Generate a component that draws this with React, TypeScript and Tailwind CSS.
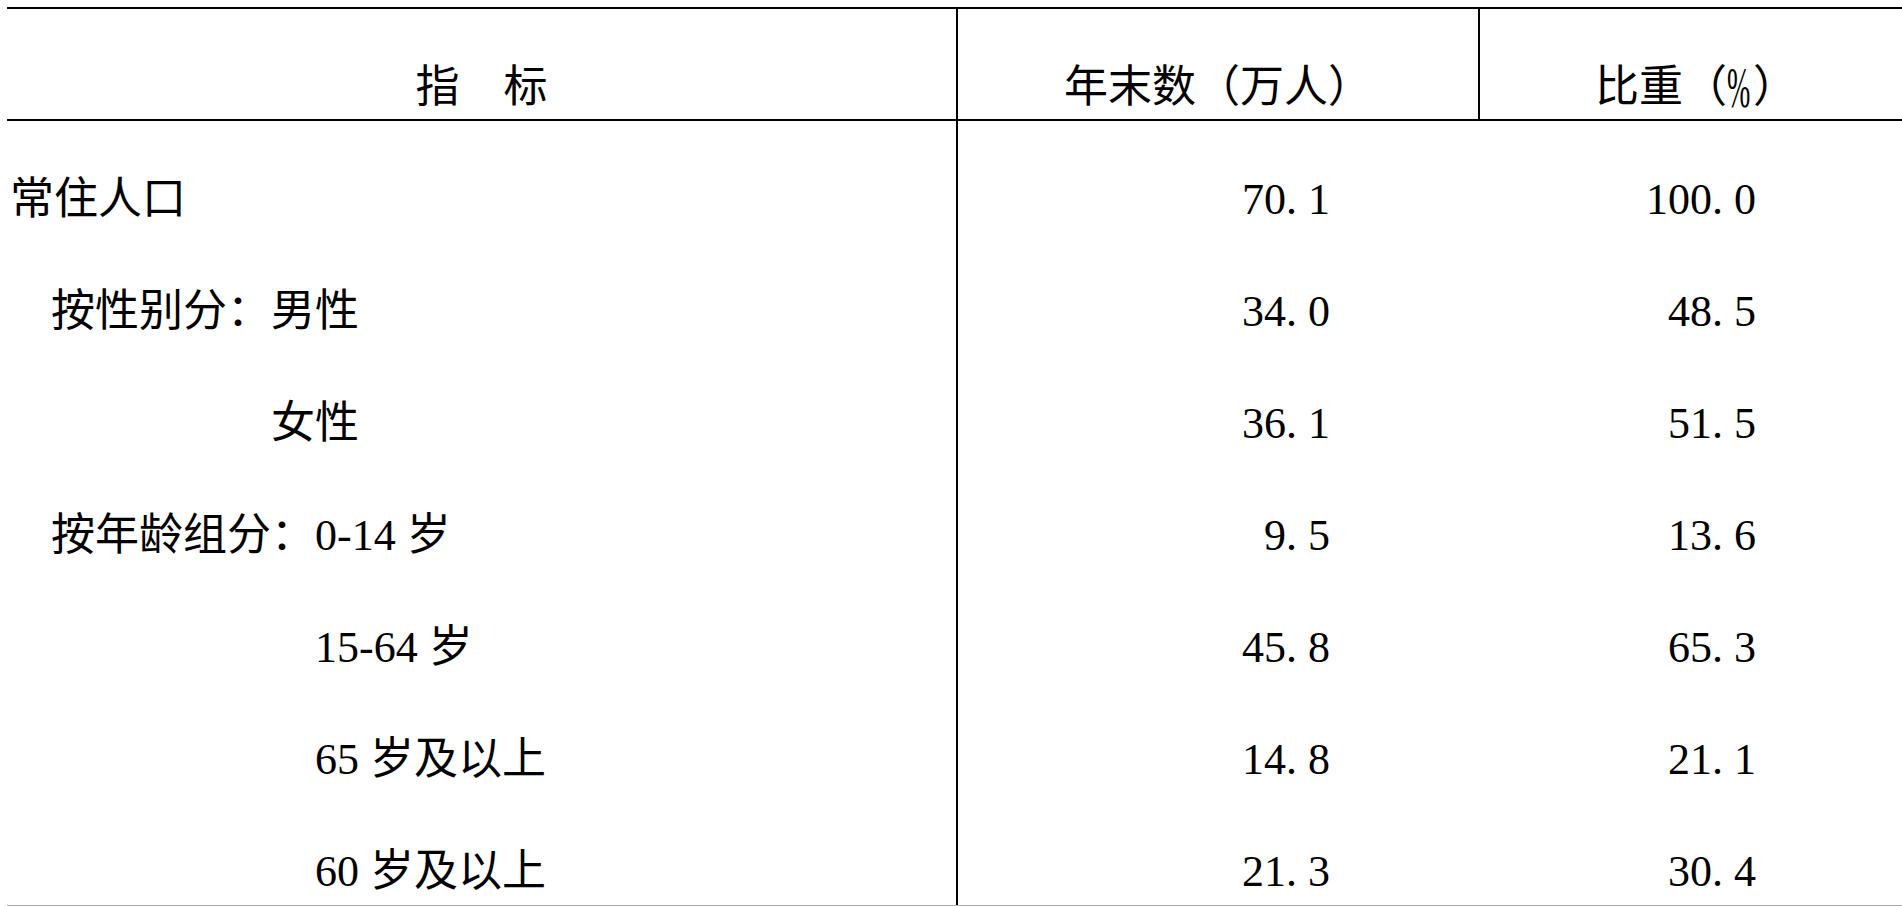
const font = "font-['Liberation_Serif','Noto_Sans_CJK_SC',serif]";

type Row = { label: string; indent: string; count: string; share: string; first?: boolean };

const rows: Row[] = [
  { label: "常住人口", indent: "pl-[3px]", count: "70.1", share: "100.0", first: true },
  { label: "按性别分：男性", indent: "pl-[44px]", count: "34.0", share: "48.5" },
  { label: "女性", indent: "pl-[264px]", count: "36.1", share: "51.5" },
  { label: "按年龄组分：0-14 岁", indent: "pl-[44px]", count: "9.5", share: "13.6" },
  { label: "15-64 岁", indent: "pl-[308px]", count: "45.8", share: "65.3" },
  { label: "65 岁及以上", indent: "pl-[308px]", count: "14.8", share: "21.1" },
  { label: "60 岁及以上", indent: "pl-[308px]", count: "21.3", share: "30.4" },
];

// period takes a half-width cell, like the source document's digits
const Num = ({ value }: { value: string }) => {
  const [whole, frac] = value.split(".");
  return (
    <span className="whitespace-nowrap">
      {whole}
      <span className="inline-block w-[22px]">.</span>
      {frac}
    </span>
  );
};

export default function App() {
  return (
    <div className={`h-[906px] overflow-hidden bg-white pl-[7px] text-black text-[44px] leading-none ${font} flex flex-col`}>
      {/* header */}
      <div className="mt-[7px] h-[114px] shrink-0 flex border-t-2 border-b-2 border-black">
        <div className="w-[951px] shrink-0 border-r-2 border-black flex items-center justify-center pt-[48px]">
          指　标
        </div>
        <div className="w-[522px] shrink-0 border-r-2 border-black flex items-center justify-center pt-[48px]">
          年末数（万人）
        </div>
        <div className="flex-1 flex items-center justify-center pt-[48px] pl-[10px]">
          <span className="whitespace-nowrap">
            比重（<span className="inline-block h-[44px] w-[26px] origin-left scale-x-[0.5] text-[56px] leading-[44px] align-top">%</span>）
          </span>
        </div>
      </div>

      {/* body */}
      <div className="flex-1 overflow-hidden border-b border-[#aaaaaa]">
        {rows.map((r) => {
          const h = r.first ? "h-[135px] pt-[23px]" : "h-[112px]";
          return (
            <div key={r.label} className="flex">
              <div className={`w-[951px] shrink-0 border-r-2 border-black flex items-center whitespace-pre ${h} ${r.indent}`}>
                {r.label}
              </div>
              <div className={`w-[524px] shrink-0 flex items-center justify-end pr-[152px] ${h}`}>
                <Num value={r.count} />
              </div>
              <div className={`flex-1 flex items-center justify-end pr-[146px] ${h}`}>
                <Num value={r.share} />
              </div>
            </div>
          );
        })}
      </div>
    </div>
  );
}
